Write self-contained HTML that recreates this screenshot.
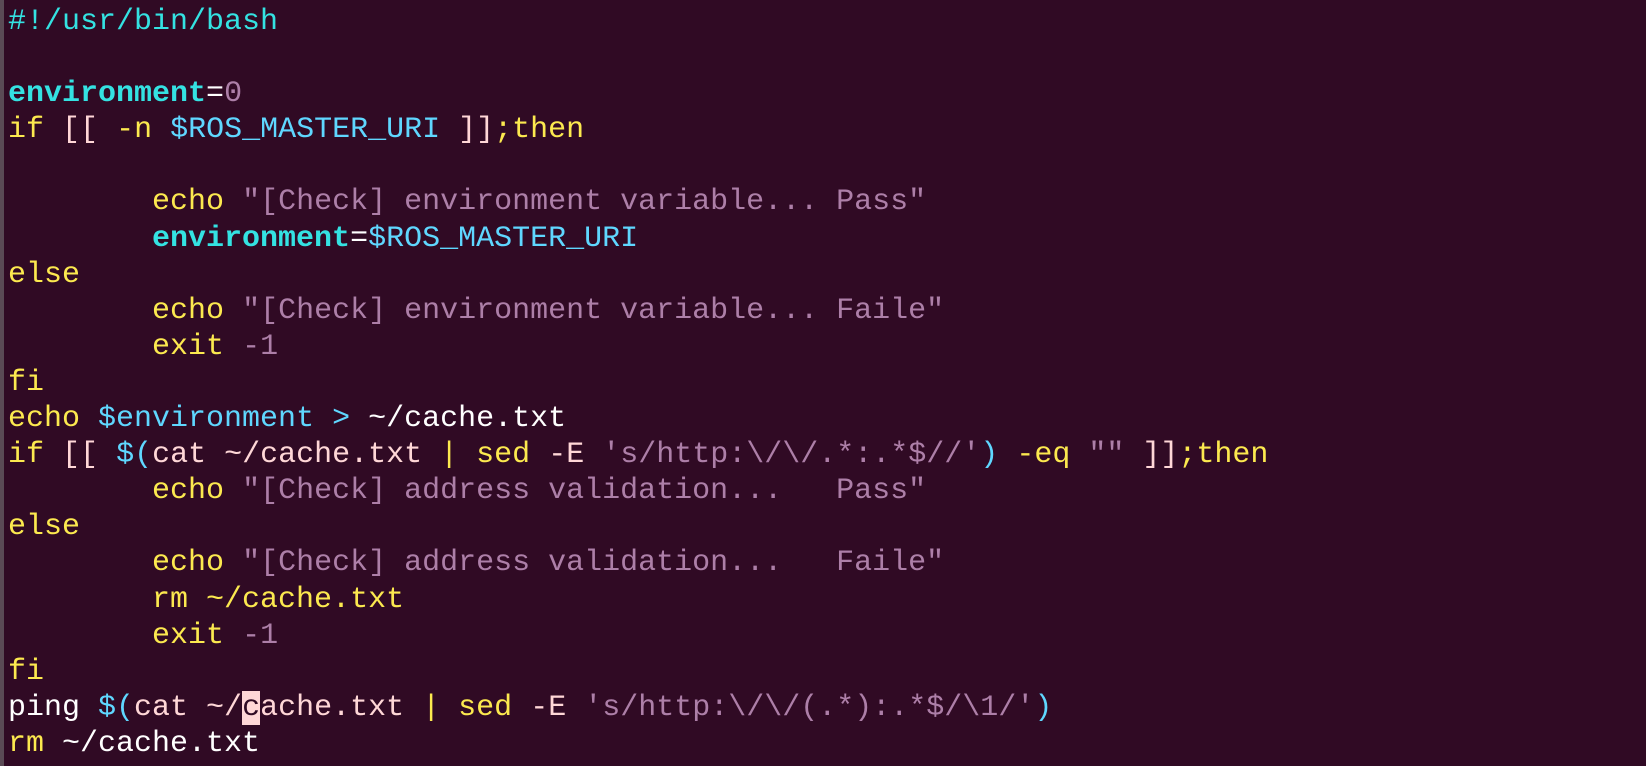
<!DOCTYPE html>
<html><head><meta charset="utf-8"><style>
html,body{margin:0;padding:0;background:#300a24;width:1646px;height:766px;overflow:hidden}
#s{position:absolute;left:0;top:0;width:4px;height:766px;background:#5a4a55}
pre{position:absolute;left:8px;top:4px;margin:0;font-family:"Liberation Mono",monospace;font-size:30px;line-height:36.1px;color:#ffffff;white-space:pre}
.c{color:#34e2e2}.cb{color:#34e2e2;font-weight:bold}.y{color:#fce94f}.m{color:#ad7fa8}.b{color:#5fd7ff}.p{color:#ffd7d7}.w{color:#fff}
.cur{background:#ffd7d7;color:#300a24}
</style></head><body><div id="s"></div><pre><span class="c">#!/usr/bin/bash</span>

<span class="cb">environment</span><span class="w">=</span><span class="m">0</span>
<span class="y">if</span> <span class="p">[[</span> <span class="y">-n</span> <span class="b">$ROS_MASTER_URI</span> <span class="p">]]</span><span class="y">;then</span>

        <span class="y">echo</span> <span class="m">"[Check] environment variable... Pass"</span>
        <span class="cb">environment</span><span class="w">=</span><span class="b">$ROS_MASTER_URI</span>
<span class="y">else</span>
        <span class="y">echo</span> <span class="m">"[Check] environment variable... Faile"</span>
        <span class="y">exit</span> <span class="m">-1</span>
<span class="y">fi</span>
<span class="y">echo</span> <span class="b">$environment</span> <span class="b">&gt;</span> <span class="w">~/cache.txt</span>
<span class="y">if</span> <span class="p">[[</span> <span class="b">$(</span><span class="p">cat ~/cache.txt</span> <span class="y">|</span> <span class="y">sed</span> <span class="p">-E</span> <span class="m">'s/http:\/\/.*:.*$//'</span><span class="b">)</span> <span class="y">-eq</span> <span class="m">""</span> <span class="p">]]</span><span class="y">;then</span>
        <span class="y">echo</span> <span class="m">"[Check] address validation...   Pass"</span>
<span class="y">else</span>
        <span class="y">echo</span> <span class="m">"[Check] address validation...   Faile"</span>
        <span class="y">rm ~/cache.txt</span>
        <span class="y">exit</span> <span class="m">-1</span>
<span class="y">fi</span>
<span class="w">ping</span> <span class="b">$(</span><span class="p">cat ~/</span><span class="cur">c</span><span class="p">ache.txt</span> <span class="y">|</span> <span class="y">sed</span> <span class="p">-E</span> <span class="m">'s/http:\/\/(.*):.*$/\1/'</span><span class="b">)</span>
<span class="y">rm</span> <span class="w">~/cache.txt</span></pre></body></html>
